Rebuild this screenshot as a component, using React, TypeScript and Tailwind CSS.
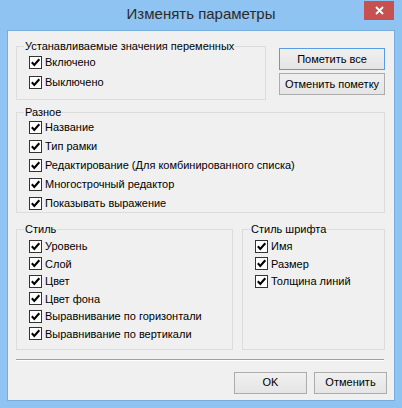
const font = "font-['Liberation_Sans',Arial,sans-serif]";

function Check({ label }: { label: string }) {
  return (
    <div className="flex h-[16px] items-center gap-[3px]">
      <span className="flex h-[13px] w-[13px] shrink-0 items-center justify-center border border-[#333333] bg-white">
        <svg width="11" height="11" viewBox="0 0 11 11" fill="none">
          <path d="M1.8 5.3 L4.3 7.9 L9.3 2.3" stroke="#000" strokeWidth="2.1" />
        </svg>
      </span>
      <span className="whitespace-nowrap leading-[16px]">{label}</span>
    </div>
  );
}

function Group({
  title,
  className,
  children,
}: {
  title: string;
  className?: string;
  children: React.ReactNode;
}) {
  return (
    <fieldset className={`border border-[#dcdcdc] pl-[12px] ${className ?? ""}`}>
      <legend className="-ml-[5px] px-[1px] leading-[16px] whitespace-nowrap">{title}</legend>
      {children}
    </fieldset>
  );
}

function Button({ label, primary, className }: { label: string; primary?: boolean; className?: string }) {
  return (
    <button
      className={`flex h-[22px] items-center justify-center whitespace-nowrap border bg-gradient-to-b from-[#f0f0f0] to-[#e5e5e5] text-[11px] text-black ${
        primary ? "border-[#569de5]" : "border-[#acacac]"
      } ${className ?? ""}`}
    >
      {label}
    </button>
  );
}

export default function App() {
  return (
    <div className={`flex h-[408px] w-[402px] flex-col bg-[#8fc3f1] ${font} text-[11px] text-black`}>
      <div className="relative flex h-[30px] items-center justify-center">
        <span className="text-[15px] text-[#2b2b2b] pb-[1px]">Изменять параметры</span>
        <div className="absolute right-[8px] top-[1px] flex h-[19px] w-[30px] items-center justify-center bg-[#c75050]">
          <svg width="9" height="9" viewBox="0 0 9 9">
            <path d="M1 1 L8 8 M8 1 L1 8" stroke="#fff" strokeWidth="1.8" />
          </svg>
        </div>
      </div>

      <div className="mx-[7px] flex h-[371px] flex-col border border-[#78acdf] bg-[#f0f0f0] pl-[8px] pr-[8px] pt-[7px]">
        <div className="flex items-start gap-[13px]">
          <Group title="Устанавливаемые значения переменных" className="w-[250px] pb-[9px]">
            <div className="flex flex-col gap-[4px]">
              <Check label="Включено" />
              <Check label="Выключено" />
            </div>
          </Group>
          <div className="mt-[10px] flex w-[106px] flex-col gap-[3px]">
            <Button label="Пометить все" primary />
            <Button label="Отменить пометку" />
          </div>
        </div>

        <Group title="Разное" className="mt-[4px] w-[369px] pb-[1px]">
          <div className="-mt-[1px] flex flex-col gap-[3px]">
            <Check label="Название" />
            <Check label="Тип рамки" />
            <Check label="Редактирование (Для комбинированного списка)" />
            <Check label="Многострочный редактор" />
            <Check label="Показывать выражение" />
          </div>
        </Group>

        <div className="mt-[8px] flex w-[369px] gap-[9px]">
          <Group title="Стиль" className="w-[217px] pb-[7px]">
            <div className="mt-[1px] flex flex-col gap-[1.5px]">
              <Check label="Уровень" />
              <Check label="Слой" />
              <Check label="Цвет" />
              <Check label="Цвет фона" />
              <Check label="Выравнивание по горизонтали" />
              <Check label="Выравнивание по вертикали" />
            </div>
          </Group>
          <Group title="Стиль шрифта" className="w-[143px] pb-[7px]">
            <div className="mt-[1px] flex flex-col gap-[1.5px]">
              <Check label="Имя" />
              <Check label="Размер" />
              <Check label="Толщина линий" />
            </div>
          </Group>
        </div>

        <div className="mt-[9px] h-[2px] w-[368px] border-t border-b border-t-[#a0a0a0] border-b-white" />

        <div className="mt-[11px] flex w-[371px] justify-end gap-[7px]">
          <Button label="OK" className="w-[73px]" />
          <Button label="Отменить" className="w-[73px]" />
        </div>
      </div>
    </div>
  );
}
